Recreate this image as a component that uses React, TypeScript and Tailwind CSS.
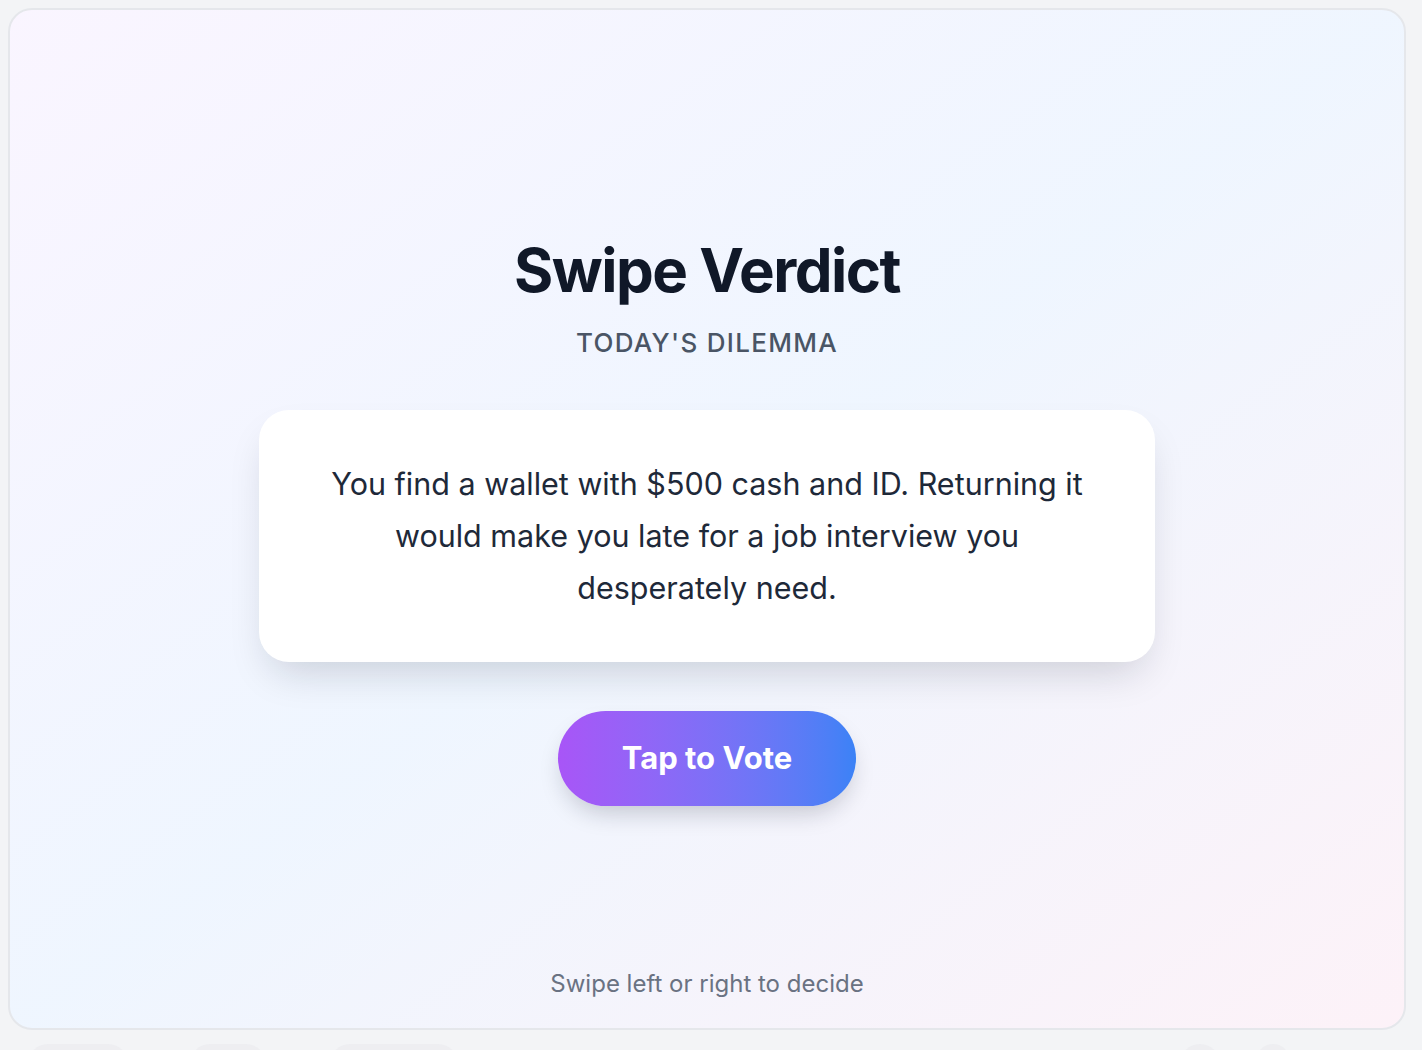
export default function App() {
    return <div className="min-h-screen bg-gray-100 pt-2 pl-2 pr-4 font-['Inter',sans-serif] overflow-hidden">
        <div className="h-[1022px] flex flex-col rounded-3xl border-2 border-gray-200 bg-linear-to-br from-purple-50 via-blue-50 to-pink-50">
            <main className="flex-1 flex flex-col items-center justify-center pt-[65px]">
                <h1 className="text-[60px] leading-[60px] font-bold tracking-tight text-gray-900">Swipe Verdict</h1>
                <p className="mt-[27px] text-[26px] leading-[32px] font-medium uppercase tracking-wider text-gray-600">Today's Dilemma</p>

                <div className="mt-[51px] w-[896px] rounded-[30px] bg-white px-16 py-12 shadow-[0_20px_40px_-12px_rgba(17,24,39,0.18)]">
                    <p className="text-center text-[30.5px] leading-[52px] text-gray-800">
                        You find a wallet with $500 cash and ID. Returning it would make you late for a job interview you desperately need.
                    </p>
                </div>

                <button className="mt-[49px] h-[95px] w-[298px] rounded-full bg-linear-to-r from-[#a855f7] to-[#3b82f6] text-[31px] font-bold text-white shadow-[0_12px_24px_-6px_rgba(17,24,39,0.22)]">
                    Tap to Vote
                </button>
            </main>

            <footer className="h-[58px] pb-[30px] text-center text-[24px] leading-[28px] text-gray-500">
                Swipe left or right to decide
            </footer>
        </div>

        {/* next row, mostly below the fold */}
        <div className="mt-[14px] flex h-10">
            <div className="ml-[20px] w-[100px] rounded-full bg-gray-200/40" />
            <div className="ml-[62px] w-[76px] rounded-full bg-gray-200/40" />
            <div className="ml-[64px] w-[128px] rounded-full bg-gray-200/40" />
            <div className="ml-auto w-[40px] rounded-full bg-gray-200/40" />
            <div className="ml-[36px] mr-[116px] w-[34px] rounded-full bg-gray-200/40" />
        </div>
    </div>
}
